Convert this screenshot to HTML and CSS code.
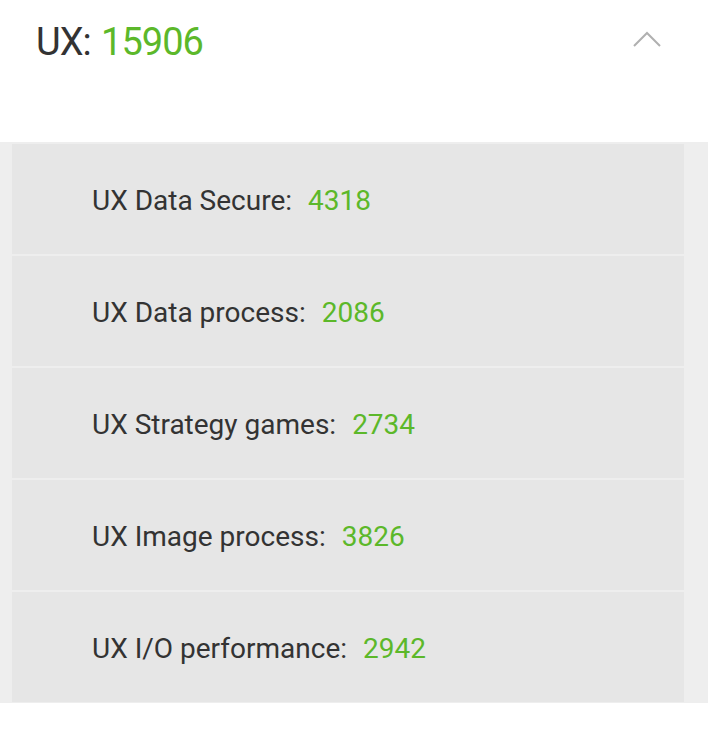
FILE: index.html
```html
<!DOCTYPE html>
<html>
<head>
<meta charset="utf-8">
<link rel="stylesheet" href="styles.css">
</head>
<body>
<div class="header">
  <div class="title">UX: <span class="num">15906</span></div>
  <svg class="chevron" width="30" height="18" viewBox="0 0 30 18"><path d="M2 16 L15 3 L28 16" fill="none" stroke="#b0b0b0" stroke-width="2"/></svg>
</div>
<div class="panel">
  <div class="row"><span class="label">UX Data Secure:</span><span class="num">4318</span></div>
  <div class="row"><span class="label">UX Data process:</span><span class="num">2086</span></div>
  <div class="row"><span class="label">UX Strategy games:</span><span class="num">2734</span></div>
  <div class="row"><span class="label">UX Image process:</span><span class="num">3826</span></div>
  <div class="row"><span class="label">UX I/O performance:</span><span class="num">2942</span></div>
</div>
</body>
</html>
```
FILE: styles.css
```css
html, body { margin: 0; padding: 0; background: #ffffff; }
body { font-family: Roboto, "Noto Sans", sans-serif; color: #333333; }
.header { height: 142px; display: flex; justify-content: space-between; align-items: flex-start; }
.title { font-size: 38px; line-height: 44px; margin: 20px 0 0 36px; letter-spacing: -1px; word-spacing: 2px; }
.num { color: #5cb82a; }
.chevron { margin: 30px 46px 0 0; }
.panel { background: #eeeeee; padding: 2px 24px 1px 12px; display: flex; flex-direction: column; gap: 2px; }
.row { background: #e6e6e6; height: 110px; display: flex; align-items: center; padding: 2px 0 0 80px; box-sizing: border-box; font-size: 28px; }
.label { margin-right: 16px; }
```
